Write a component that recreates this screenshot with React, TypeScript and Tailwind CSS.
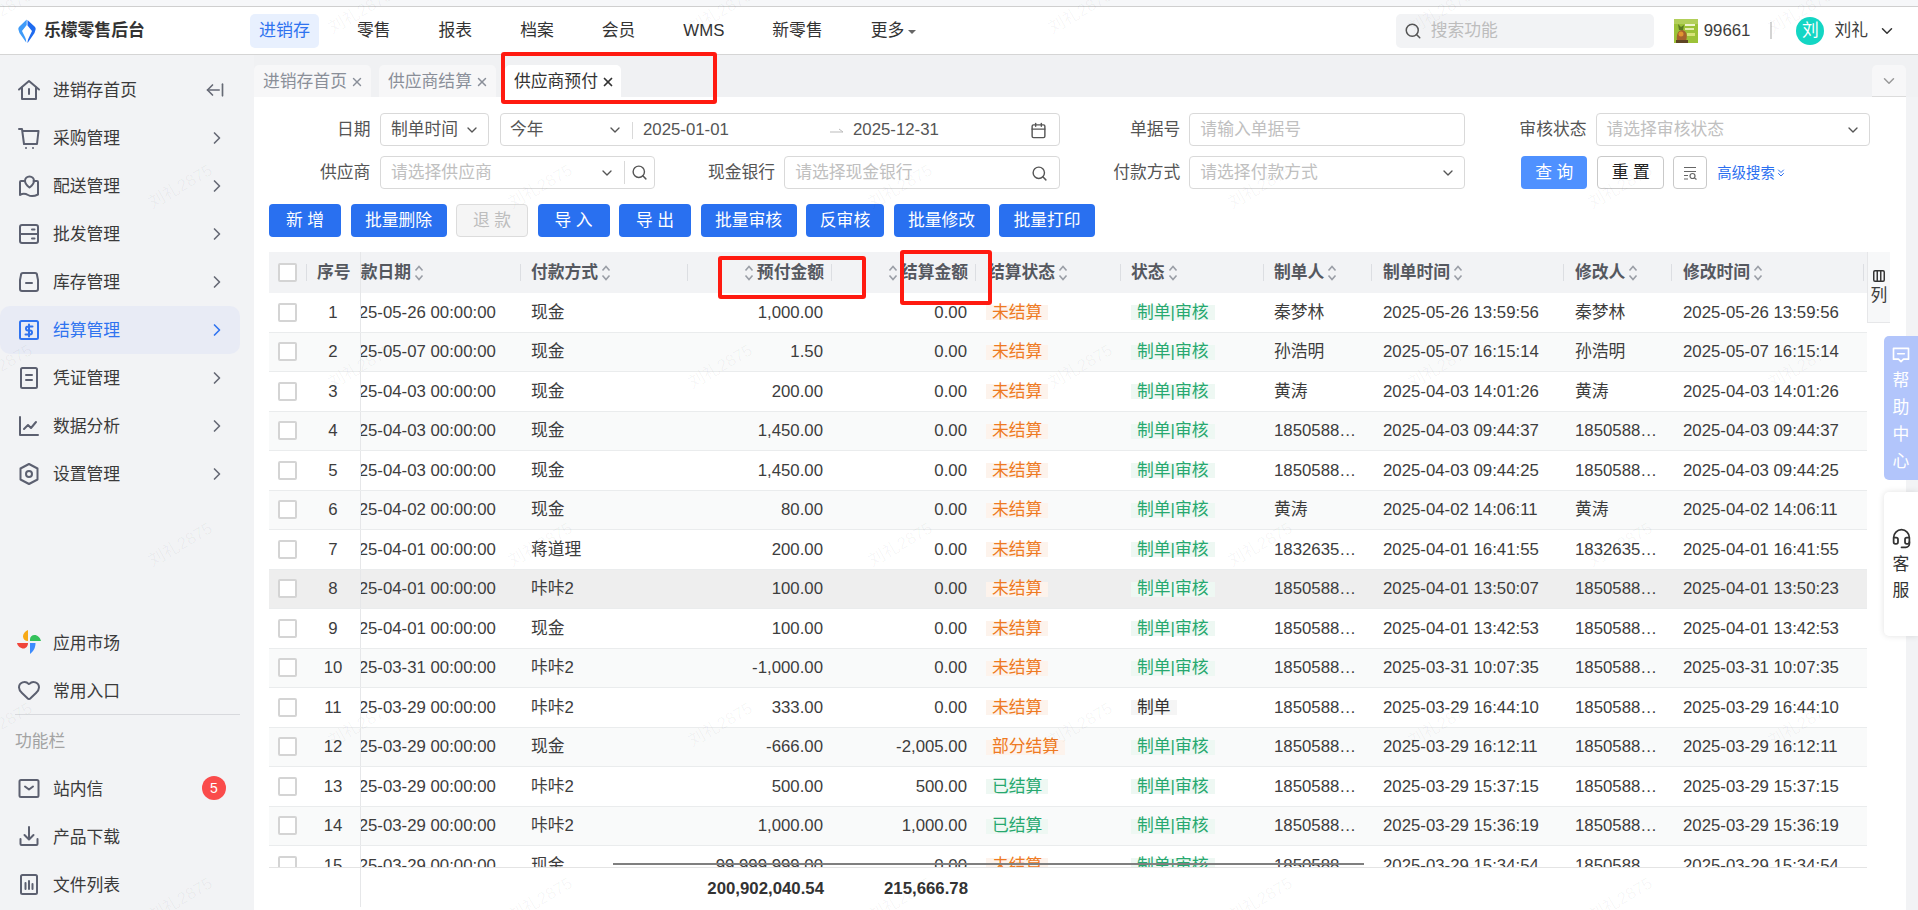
import { ChevronDown, ChevronRight, Search, Heart, ArrowLeftFromLine, X, Calendar, Columns3, Headset, ChevronsDown } from 'lucide-react';
import type { ReactNode } from 'react';

const iconClass = 'w-[24px] h-[24px] shrink-0 text-[#5c6070]';

const Ico = ({ children, className = iconClass }: { children: ReactNode; className?: string }) => (
  <svg viewBox="0 0 24 24" fill="none" stroke="currentColor" strokeWidth="2" strokeLinecap="round" strokeLinejoin="round" className={className}>
    {children}
  </svg>
);

const menu: { name: string; icon: ReactNode }[] = [
  { name: '采购管理', icon: <><path d="M2 3h3l2 15h13l1.500-13H5.500" /><path d="M9 22h.01M16 22h.01" /></> },
  { name: '配送管理', icon: <><path d="M7.500 7H4a1 1 0 0 0-1 1v13c3-2 5.500-1.500 8 0s6 1.500 10-.5V8a1 1 0 0 0-1-1h-3.500" /><path d="M12.500 2.500a4.500 4.500 0 0 1 4.500 4.500c0 3-4.500 6.500-4.500 6.500S8 10 8 7a4.500 4.500 0 0 1 4.500-4.500z" /></> },
  { name: '批发管理', icon: <><rect x="3" y="3" width="18" height="18" rx="2" /><path d="M3 12h18M15 7.500h2.500M15 16.500h2.500" /></> },
  { name: '库存管理', icon: <><path d="M6 3h12a2 2 0 0 1 2 2l1 5v9a2 2 0 0 1-2 2H5a2 2 0 0 1-2-2v-9l1-5a2 2 0 0 1 2-2z" /><path d="M9 13h6" /></> },
  { name: '结算管理', icon: <><rect x="3" y="3" width="18" height="18" rx="1.500" /><path d="M15.500 8.500H11a2 2 0 0 0 0 4h2a2 2 0 0 1 0 4H8.500M12 6.500v12" /></> },
  { name: '凭证管理', icon: <><rect x="4" y="2" width="16" height="20" rx="1.500" /><path d="M9 9h6M9 14h6" /></> },
  { name: '数据分析', icon: <><path d="M3 3v18h18" /><path d="M7 15l4-4 3 3 5-6" /></> },
  { name: '设置管理', icon: <><path d="M12 2l8.500 4.500v11L12 22l-8.500-4.500v-11z" /><circle cx="12" cy="12" r="3" /></> },
];

const rows = [
  ['25-05-26', '现金', '1,000.00', '0.00', '未结算', '制单|审核', '秦梦林', '2025-05-26 13:59:56', '秦梦林', '2025-05-26 13:59:56'],
  ['25-05-07', '现金', '1.50', '0.00', '未结算', '制单|审核', '孙浩明', '2025-05-07 16:15:14', '孙浩明', '2025-05-07 16:15:14'],
  ['25-04-03', '现金', '200.00', '0.00', '未结算', '制单|审核', '黄涛', '2025-04-03 14:01:26', '黄涛', '2025-04-03 14:01:26'],
  ['25-04-03', '现金', '1,450.00', '0.00', '未结算', '制单|审核', '18505881234', '2025-04-03 09:44:37', '18505881234', '2025-04-03 09:44:37'],
  ['25-04-03', '现金', '1,450.00', '0.00', '未结算', '制单|审核', '18505881234', '2025-04-03 09:44:25', '18505881234', '2025-04-03 09:44:25'],
  ['25-04-02', '现金', '80.00', '0.00', '未结算', '制单|审核', '黄涛', '2025-04-02 14:06:11', '黄涛', '2025-04-02 14:06:11'],
  ['25-04-01', '蒋道理', '200.00', '0.00', '未结算', '制单|审核', '18326351234', '2025-04-01 16:41:55', '18326351234', '2025-04-01 16:41:55'],
  ['25-04-01', '咔咔2', '100.00', '0.00', '未结算', '制单|审核', '18505881234', '2025-04-01 13:50:07', '18505881234', '2025-04-01 13:50:23'],
  ['25-04-01', '现金', '100.00', '0.00', '未结算', '制单|审核', '18505881234', '2025-04-01 13:42:53', '18505881234', '2025-04-01 13:42:53'],
  ['25-03-31', '咔咔2', '-1,000.00', '0.00', '未结算', '制单|审核', '18505881234', '2025-03-31 10:07:35', '18505881234', '2025-03-31 10:07:35'],
  ['25-03-29', '咔咔2', '333.00', '0.00', '未结算', '制单', '18505881234', '2025-03-29 16:44:10', '18505881234', '2025-03-29 16:44:10'],
  ['25-03-29', '现金', '-666.00', '-2,005.00', '部分结算', '制单|审核', '18505881234', '2025-03-29 16:12:11', '18505881234', '2025-03-29 16:12:11'],
  ['25-03-29', '咔咔2', '500.00', '500.00', '已结算', '制单|审核', '18505881234', '2025-03-29 15:37:15', '18505881234', '2025-03-29 15:37:15'],
  ['25-03-29', '咔咔2', '1,000.00', '1,000.00', '已结算', '制单|审核', '18505881234', '2025-03-29 15:36:19', '18505881234', '2025-03-29 15:36:19'],
  ['25-03-29', '现金', '99,999,999.00', '0.00', '未结算', '制单|审核', '18505881234', '2025-03-29 15:34:54', '18505881234', '2025-03-29 15:34:54'],
];

const marks = [
  [178, 187], [538, 187], [898, 187], [1258, 187], [1618, 187],
  [178, 545], [538, 545], [898, 545], [1258, 545], [1618, 545],
  [178, 900], [538, 900], [898, 900], [1258, 900], [1618, 900],
  [-2, 12], [358, 12], [718, 12], [1078, 12], [1438, 12], [1798, 12],
  [-2, 367], [358, 367], [718, 367], [1078, 367], [1438, 367], [1798, 367],
  [-2, 725], [358, 725], [718, 725], [1078, 725], [1438, 725], [1798, 725],
];

const Sort = () => (
  <svg viewBox="0 0 10 18" fill="none" stroke="#9a9ea6" strokeWidth="1.600" className="w-[10px] h-[18px] ml-[3px] shrink-0">
    <path d="M1.500 6.500L5 2.500l3.500 4M1.500 11.500l3.500 4 3.500-4" />
  </svg>
);

const SideItem = ({ name, icon, active, arrow = true }: { name: string; icon: ReactNode; active?: boolean; arrow?: boolean }) => (
  <div className={`h-[48px] w-[240px] shrink-0 rounded-[10px] flex items-center pl-[17px] ${active ? 'bg-[#e8ebf5] text-[#2f73f0]' : 'text-[#3a3a3a]'}`}>
    <Ico className={`w-[24px] h-[24px] shrink-0 ${active ? 'text-[#2f73f0]' : 'text-[#5c6070]'}`}>{icon}</Ico>
    <span className="ml-[12px] flex-1 pt-[2px]">{name}</span>
    {arrow && <ChevronRight className={`w-[20px] h-[20px] mr-[13px] ${active ? 'text-[#2f73f0]' : 'text-[#666a75]'}`} />}
  </div>
);

const Field = ({ label, width, text, icon, className = '' }: { label: string; width: string; text: string; icon?: ReactNode; className?: string }) => (
  <div className={`flex items-center ${className}`}>
    <span className="text-[#555] mr-[9px] whitespace-nowrap pt-px">{label}</span>
    <div className={`${width} h-[33px] border border-[#d9d9d9] rounded-[4px] flex items-center pl-[10px] pr-[8px] justify-between`}>
      <span className="text-[#c0c0c0] whitespace-nowrap pt-px">{text}</span>
      {icon}
    </div>
  </div>
);

const Btn = ({ w, children, off }: { w: string; children: ReactNode; off?: boolean }) => (
  <button className={`${w} h-[33px] pt-px rounded-[4px] flex items-center justify-center ${off ? 'bg-[#f5f5f5] border border-[#dcdcdc] text-[#bdbdbd]' : 'bg-[#2970f0] text-white'}`}>
    {children}
  </button>
);

const Head = ({ w, label, align, pl, end }: { w: string; label: string; align?: 'right'; pl?: string; end?: boolean }) => (
  <div className={`${w} shrink-0 h-full flex items-center relative ${align === 'right' ? 'justify-end pr-[8px]' : pl ?? 'pl-[10px]'}`}>
    {align === 'right' && <Sort />}
    <span className="ml-[3px] whitespace-nowrap">{label}</span>
    {align !== 'right' && <Sort />}
    {!end && <i className="absolute right-0 top-[12px] h-[17px] w-px bg-[#dcdee2]" />}
  </div>
);

const Tag = ({ text, kind }: { text: string; kind: 'orange' | 'green' | 'gray' }) => (
  <span className={`px-[6px] h-[15px] flex items-center whitespace-nowrap ${kind === 'orange' ? 'bg-[#fdf3ec] text-[#ee7a22]' : kind === 'green' ? 'bg-[#eef8f3] text-[#27a86f]' : 'bg-[#f5f5f5] text-[#333]'}`}>
    {text}
  </span>
);

const Row = ({ r, i }: { r: string[]; i: number }) => (
  <div className={`h-[39.500px] shrink-0 flex items-center border-b border-[#eaeced] ${i === 7 ? 'bg-[#eeeeee]' : i % 2 === 1 ? 'bg-[#f9fafa]' : 'bg-white'}`}>
    <div className="w-[38px] shrink-0 flex pl-[9px]">
      <span className="w-[19px] h-[19px] rounded-[2px] border-2 border-[#d4d4d4] bg-white" />
    </div>
    <div className="w-[53px] shrink-0 text-center pr-[1px] pt-px">{i + 1}</div>
    <div className="w-[161px] shrink-0 overflow-hidden whitespace-nowrap h-full flex items-center border-l border-[#e6e7e9] pt-px">
      <span className="ml-[-21px]">20{r[0]} 00:00:00</span>
    </div>
    <div className="w-[167px] shrink-0 pl-[10px] pt-px">{r[1]}</div>
    <div className="w-[144px] shrink-0 text-right pr-[9px] pt-px">{r[2]}</div>
    <div className="w-[144px] shrink-0 text-right pr-[9px] pt-px">{r[3]}</div>
    <div className="w-[145px] shrink-0 flex pl-[10px] pt-px">
      <Tag text={r[4]} kind={r[4] === '已结算' ? 'green' : 'orange'} />
    </div>
    <div className="w-[143px] shrink-0 flex pl-[10px] pt-px">
      <Tag text={r[5]} kind={r[5] === '制单' ? 'gray' : 'green'} />
    </div>
    <div className="w-[108px] shrink-0 pl-[10px] pr-[10px] truncate pt-px">{r[6]}</div>
    <div className="w-[192px] shrink-0 pl-[11px] pt-px">{r[7]}</div>
    <div className="w-[108px] shrink-0 pl-[11px] pr-[9px] truncate pt-px">{r[8]}</div>
    <div className="w-[192px] shrink-0 pl-[11px] pt-px">{r[9]}</div>
  </div>
);

export default function App() {
  return (
    <div className="relative w-full h-[910px] overflow-hidden bg-[#f2f3f5] text-[16.800px] leading-[20px] text-[#3d3d3d] font-['Liberation_Sans','Noto_Sans_CJK_SC',sans-serif]">
      <div className="h-[7px] bg-[#f6f7f9] border-b border-[#cfcfcf]" />

      {/* top */}
      <div className="h-[48px] bg-white border-b border-[#d5d5d5] flex items-center">
        <div className="w-[250px] shrink-0 flex items-center pl-[18px]">
          <svg viewBox="0 0 18 24" className="w-[18px] h-[24px]">
            <path d="M8.700 0.500L1.200 7.800Q0 9 0.400 10.500L1.500 14 8.200 23.500C8.500 20 6.800 17.500 4 12L8.700 6z" fill="#3f9bf8" />
            <path d="M9.500 1L16.800 7.800Q18 9 17.600 10.500L16.500 14 9.600 24C9.300 21 11.500 17.500 14 12L9.500 6.500z" fill="#1f6bef" />
          </svg>
          <span className="ml-[8px] font-bold text-[#333] whitespace-nowrap">乐檬零售后台</span>
        </div>
        <div className="h-[34px] w-[69px] pt-px rounded-[5px] bg-[#e8f0fe] text-[#2f73f0] flex items-center justify-center text-[17px]">进销存</div>
        <div className="flex items-center text-[#333] ml-[38px] gap-x-[48px] pt-px">
          <span>零售</span>
          <span>报表</span>
          <span>档案</span>
          <span>会员</span>
          <span>WMS</span>
          <span>新零售</span>
          <span className="flex items-center">更多<i className="ml-[4px] mt-[2px] border-x-[4px] border-x-transparent border-t-[4px] border-t-[#666]" /></span>
        </div>
        <div className="ml-auto w-[258px] h-[34px] rounded-[5px] bg-[#f2f3f5] flex items-center pl-[8px]">
          <Search className="w-[18px] h-[18px] text-[#555]" />
          <span className="ml-[9px] text-[#bdbdbd] pt-px">搜索功能</span>
        </div>
        <svg viewBox="0 0 24 24" className="w-[24px] h-[24px] ml-[20px]">
          <rect width="24" height="24" fill="#9cc238" />
          <rect width="24" height="5" fill="#b2cf5a" />
          <rect x="11" y="5" width="10" height="2" fill="#eef3cf" />
          <rect x="11" y="9" width="9" height="2" fill="#e4edb0" />
          <path d="M4 5l3 3 3-2-1 5-4 0z" fill="#5a7a22" />
          <path d="M3 22c-1-6 1-11 5-11s6 5 4 11z" fill="#a5622c" />
          <circle cx="7" cy="15" r="2.500" fill="#e2932f" />
          <rect x="13" y="14" width="8" height="3" fill="#d6e37a" />
          <rect x="2" y="21" width="12" height="3" fill="#5e4423" />
        </svg>
        <span className="ml-[6px] pt-px">99661</span>
        <i className="ml-[20px] h-[17px] w-[2px] bg-[#d4d4d4]" />
        <span className="ml-[24px] w-[28px] h-[28px] rounded-full bg-[#13d6c4] text-white flex items-center justify-center">刘</span>
        <span className="ml-[10px] pt-px">刘礼</span>
        <ChevronDown className="ml-[10px] mr-[22px] w-[18px] h-[18px] text-[#333]" />
      </div>

      <div className="flex h-[855px]">
        {/* sidebar */}
        <div className="w-[254px] shrink-0 flex flex-col pt-[11px] h-full">
          <div className="h-[48px] w-[240px] shrink-0 flex items-center pl-[17px] text-[#3a3a3a]">
            <Ico>
              <path d="M2 11.500L12 3l10 8.500" /><path d="M5 9.500V21h14V9.500" /><path d="M12 11v5" />
            </Ico>
            <span className="ml-[12px] flex-1 pt-[2px]">进销存首页</span>
            <ArrowLeftFromLine className="w-[20px] h-[20px] mr-[15px] text-[#666a75]" />
          </div>
          {menu.map((m) => (
            <SideItem key={m.name} name={m.name} icon={m.icon} active={m.name === '结算管理'} />
          ))}
          <div className="mt-[120px] shrink-0">
            <div className="h-[48px] w-[240px] flex items-center pl-[17px] text-[#3a3a3a]">
              <svg viewBox="0 0 24 24" className="w-[24px] h-[24px] shrink-0">
                <path d="M11 11C8 11 6 9 6 6.500 6 3.500 8.500 1 11 0z" fill="#f7a916" />
                <path d="M13 11V9.500C13 6.500 15 5 17.500 5 20.500 5 23 7.500 24 11z" fill="#34c15b" />
                <path d="M13 13h5.500C18.500 17 17 21 13 24z" fill="#3d8bfd" />
                <path d="M11 13H0C0.500 16 3.500 18.500 6.500 18.500 9 18.500 11 16 11 13z" fill="#f0453a" />
              </svg>
              <span className="ml-[12px] pt-[3px]">应用市场</span>
            </div>
            <div className="h-[48px] w-[240px] flex items-center pl-[17px] text-[#3a3a3a]">
              <Heart className="w-[24px] h-[24px] text-[#5c6070]" />
              <span className="ml-[12px] pt-[3px]">常用入口</span>
            </div>
          </div>
          <div className="ml-[15px] w-[225px] h-px shrink-0 bg-[#d8d9dd]" />
          <div className="ml-[15px] mt-[17px] shrink-0 text-[#a3a3a3]">功能栏</div>
          <div className="mt-[12px] shrink-0">
            <div className="h-[48px] w-[240px] flex items-center pl-[17px] text-[#3a3a3a]">
              <Ico><rect x="2.500" y="4" width="19" height="17" rx="1.500" /><path d="M8 10.500l4 3 4-3" /></Ico>
              <span className="ml-[12px] flex-1 pt-[3px]">站内信</span>
              <span className="mr-[14px] w-[24px] h-[24px] rounded-full bg-[#fa4b4b] text-white text-[14px] flex items-center justify-center">5</span>
            </div>
            <div className="h-[48px] w-[240px] flex items-center pl-[17px] text-[#3a3a3a]">
              <Ico><path d="M12 3v12M7.500 11l4.500 4.500 4.500-4.500" /><path d="M3.500 15v5a1 1 0 0 0 1 1h15a1 1 0 0 0 1-1v-5" /></Ico>
              <span className="ml-[12px] pt-[3px]">产品下载</span>
            </div>
            <div className="h-[48px] w-[240px] flex items-center pl-[17px] text-[#3a3a3a]">
              <Ico><rect x="4" y="3" width="16" height="19" rx="1.500" /><path d="M8.500 11v6M12 9v8M15.500 12v5" /></Ico>
              <span className="ml-[12px] pt-[3px]">文件列表</span>
            </div>
          </div>
        </div>

        {/* main */}
        <div className="flex-1 flex flex-col min-w-0">
          {/* tabs */}
          <div className="h-[42px] shrink-0 bg-[#f0f1f3] flex items-end pr-[12px]">
            <div className="w-[117px] h-[32px] pt-[2px] bg-[#f7f7f8] rounded-t-[5px] flex items-center pl-[9px] text-[#8a8f99] whitespace-nowrap">
              进销存首页<X className="w-[14px] h-[14px] ml-[3px]" strokeWidth={2.500} />
            </div>
            <div className="ml-[8px] w-[117px] h-[32px] pt-[2px] bg-[#f7f7f8] rounded-t-[5px] flex items-center pl-[9px] text-[#8a8f99] whitespace-nowrap">
              供应商结算<X className="w-[14px] h-[14px] ml-[3px]" strokeWidth={2.500} />
            </div>
            <div className="ml-[9px] w-[116px] h-[32px] pt-[2px] bg-white rounded-t-[5px] flex items-center pl-[9px] text-[#333] whitespace-nowrap">
              供应商预付<X className="w-[14px] h-[14px] ml-[3px]" strokeWidth={3} />
            </div>
            <div className="ml-auto w-[34px] h-[32px] bg-[#f7f7f8] rounded-t-[5px] border-b border-[#dcdcdc] flex items-center justify-center">
              <ChevronDown className="w-[18px] h-[18px] text-[#9a9a9a]" />
            </div>
          </div>

          <div className="flex-1 flex min-h-0">
            <div className="w-[1652px] shrink-0 bg-white flex flex-col min-h-0">
              {/* filters */}
              <div className="h-[107px] shrink-0 relative pt-[16px]">
                <div className="flex items-center h-[33px]">
                  <span className="ml-[83px] w-[32px] text-[#555] whitespace-nowrap pt-px">日期</span>
                  <div className="ml-[11px] w-[109px] h-[33px] pt-px border border-[#d9d9d9] rounded-[4px] flex items-center justify-between pl-[10px] pr-[8px] text-[#555]">
                    制单时间<ChevronDown className="w-[16px] h-[16px] text-[#555]" />
                  </div>
                  <div className="ml-[11px] w-[560px] h-[33px] pt-px border border-[#d9d9d9] rounded-[4px] flex items-center text-[#555]">
                    <span className="w-[132px] h-[17px] flex items-center justify-between pl-[9px] pr-[9px] border-r border-[#d9d9d9]">
                      今年<ChevronDown className="w-[16px] h-[16px] text-[#555]" />
                    </span>
                    <span className="ml-[10px] w-[186px]">2025-01-01</span>
                    <svg viewBox="0 0 16 8" className="w-[16px] h-[8px] text-[#bbb]" fill="none" stroke="currentColor" strokeWidth="1"><path d="M1 6h13M10 3l4 3" /></svg>
                    <span className="ml-[8px] flex-1">2025-12-31</span>
                    <Calendar className="w-[17px] h-[17px] mr-[12px] text-[#555]" />
                  </div>
                  <Field className="ml-[70px]" label="单据号" width="w-[276px]" text="请输入单据号" />
                  <Field className="ml-[54px]" label="审核状态" width="w-[274px]" text="请选择审核状态" icon={<ChevronDown className="w-[16px] h-[16px] text-[#555]" />} />
                </div>
                <div className="flex items-center h-[33px] mt-[10px]">
                  <span className="ml-[66px] w-[49px] text-[#555] whitespace-nowrap pt-px">供应商</span>
                  <div className="ml-[11px] w-[275px] h-[33px] border border-[#d9d9d9] rounded-[4px] flex items-center pl-[10px] text-[#c0c0c0]">
                    <span className="flex-1 pt-px">请选择供应商</span>
                    <ChevronDown className="w-[16px] h-[16px] text-[#555]" />
                    <i className="ml-[9px] h-[23px] w-px bg-[#d9d9d9]" />
                    <Search className="mx-[6px] w-[17px] h-[17px] text-[#555]" />
                  </div>
                  <span className="ml-[53px] text-[#555] whitespace-nowrap pt-px">现金银行</span>
                  <div className="ml-[9px] w-[276px] h-[33px] pt-px border border-[#d9d9d9] rounded-[4px] flex items-center justify-between pl-[10px] pr-[11px] text-[#c0c0c0]">
                    请选择现金银行<Search className="w-[17px] h-[17px] text-[#555]" />
                  </div>
                  <Field className="ml-[53px]" label="付款方式" width="w-[276px]" text="请选择付款方式" icon={<ChevronDown className="w-[16px] h-[16px] text-[#555]" />} />
                  <button className="ml-[56px] w-[66px] h-[33px] rounded-[4px] bg-[#4f91ff] text-white">查 询</button>
                  <button className="ml-[10px] w-[67px] h-[33px] rounded-[4px] border border-[#c9c9c9] text-[#222]">重 置</button>
                  <span className="ml-[9px] w-[34px] h-[33px] rounded-[4px] border border-[#c9c9c9] flex items-center justify-center">
                    <svg viewBox="0 0 16 16" className="w-[16px] h-[16px] text-[#666]" fill="none" stroke="currentColor" strokeWidth="1.200"><path d="M2 2.500h12M2 6.500h12M2 10.500h4M2 14h4" /><circle cx="10.500" cy="11" r="2.500" /><path d="M12.500 13l2 1.500" /></svg>
                  </span>
                  <span className="ml-[10px] text-[14.400px] text-[#2b6ff0] flex items-center whitespace-nowrap">
                    高级搜索<ChevronsDown className="w-[12px] h-[14px]" />
                  </span>
                </div>
              </div>

              {/* buttons */}
              <div className="h-[48px] shrink-0 flex gap-x-[9.500px] pl-[15px]">
                <Btn w="w-[72px]">新 增</Btn>
                <Btn w="w-[96px]">批量删除</Btn>
                <Btn w="w-[72px]" off>退 款</Btn>
                <Btn w="w-[72px]">导 入</Btn>
                <Btn w="w-[72px]">导 出</Btn>
                <Btn w="w-[96px]">批量审核</Btn>
                <Btn w="w-[78px]">反审核</Btn>
                <Btn w="w-[96px]">批量修改</Btn>
                <Btn w="w-[96px]">批量打印</Btn>
              </div>

              {/* table */}
              <div className="flex pl-[15px] flex-1 min-h-0">
                <div className="w-[1598px] shrink-0 flex flex-col">
                  <div className="h-[41px] shrink-0 flex items-center bg-[#f2f3f5] font-bold text-[#55585f]">
                    <div className="w-[38px] shrink-0 flex pl-[9px] relative">
                      <span className="w-[19px] h-[19px] rounded-[2px] border-2 border-[#d4d4d4] bg-white" />
                      <i className="absolute right-[0px] top-[1px] h-[17px] w-px bg-[#dcdee2]" />
                    </div>
                    <div className="w-[53px] shrink-0 pl-[10px] whitespace-nowrap">序号</div>
                    <div className="w-[161px] shrink-0 h-full flex items-center overflow-hidden border-l border-[#e6e7e9] relative">
                      <span className="ml-[-17px] flex items-center whitespace-nowrap">付款日期<Sort /></span>
                      <i className="absolute right-0 top-[12px] h-[17px] w-px bg-[#dcdee2]" />
                    </div>
                    <Head w="w-[167px]" label="付款方式" pl="pl-[7px]" />
                    <Head w="w-[144px]" label="预付金额" align="right" />
                    <Head w="w-[144px]" label="结算金额" align="right" />
                    <Head w="w-[145px]" label="结算状态" pl="pl-[9px]" />
                    <Head w="w-[143px]" label="状态" pl="pl-[7px]" />
                    <Head w="w-[108px]" label="制单人" pl="pl-[7px]" />
                    <Head w="w-[192px]" label="制单时间" pl="pl-[8px]" />
                    <Head w="w-[108px]" label="修改人" pl="pl-[8px]" />
                    <Head w="w-[192px]" label="修改时间" pl="pl-[8px]" />
                  </div>
                  <div className="h-[575px] shrink-0 overflow-hidden flex flex-col border-b border-[#e4e4e4]">
                    {rows.map((r, i) => (
                      <Row key={i} r={r} i={i} />
                    ))}
                  </div>
                  <div className="flex-1 flex items-center font-bold text-[#333]">
                    <div className="w-[91px] shrink-0" />
                    <div className="w-[161px] shrink-0 h-[39px] self-start border-l border-[#e6e7e9]" />
                    <div className="w-[167px] shrink-0" />
                    <div className="w-[144px] shrink-0 text-right pr-[8px]">200,902,040.54</div>
                    <div className="w-[144px] shrink-0 text-right pr-[8px]">215,666.78</div>
                  </div>
                </div>
                <div className="w-[23px] shrink-0">
                  <div className="h-[71px] bg-[#f7f8f9] border-l border-b border-[#e6e7e9] flex flex-col items-center justify-end pb-[16px]">
                    <Columns3 className="w-[14px] h-[14px] text-[#333]" strokeWidth={2.500} />
                    <span className="mt-[3px]">列</span>
                  </div>
                </div>
              </div>
            </div>
            <div className="w-[12px] shrink-0" />
          </div>
        </div>
      </div>

      {/* floating */}
      <div className="absolute left-[1884px] top-[336px] w-[34px] h-[144px] rounded-l-[5px] bg-[#b2c5fb] text-white flex flex-col items-center pt-[9px]">
        <Ico className="w-[20px] h-[20px]"><path d="M3 4h18v13h-6l-3 3-3-3H3z" /><path d="M8 10.500h8" /></Ico>
        <span className="flex flex-col mt-[6px] gap-y-[7px]">
          <span>帮</span><span>助</span><span>中</span><span>心</span>
        </span>
      </div>
      <div className="absolute left-[1884px] top-[492px] w-[34px] h-[144px] rounded-l-[5px] bg-white shadow-[0_0_6px_rgba(0,0,0,0.12)] text-[#333] flex flex-col items-center pt-[36px]">
        <Headset className="w-[21px] h-[21px]" />
        <span className="flex flex-col mt-[6px] gap-y-[6px]">
          <span>客</span><span>服</span>
        </span>
      </div>

      {/* annotations */}
      <div className="absolute left-[501px] top-[52px] w-[216px] h-[52px] border-[4px] border-[#ff1a10] rounded-[3px]" />
      <div className="absolute left-[718px] top-[256px] w-[148px] h-[43px] border-[4px] border-[#ff1a10] rounded-[3px]" />
      <div className="absolute left-[900px] top-[250px] w-[92px] h-[55px] border-[4px] border-[#ff1a10] rounded-[3px]" />
      <div className="absolute left-[613px] top-[863px] w-[751px] h-[2px] bg-[#7f7f7f]" />

      {marks.map(([x, y]) => (
        <span key={`${x}-${y}`} style={{ left: x - 33, top: y - 10 }} className="absolute -rotate-30 text-black/[0.04] pointer-events-none whitespace-nowrap">
          刘礼2875
        </span>
      ))}
    </div>
  );
}
